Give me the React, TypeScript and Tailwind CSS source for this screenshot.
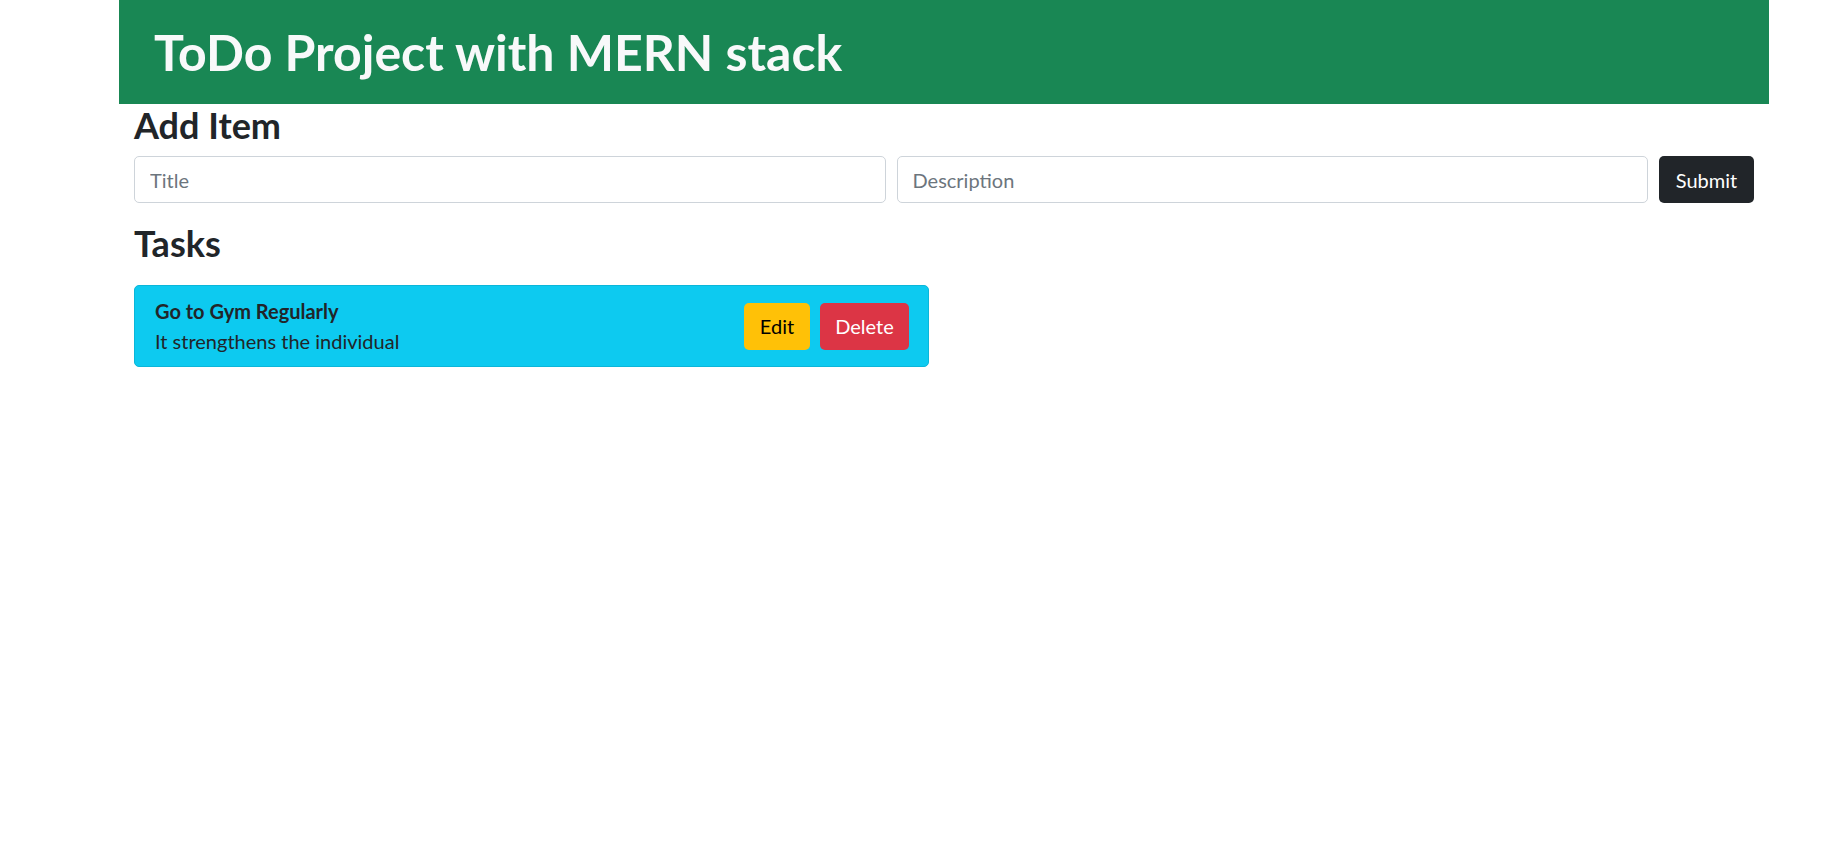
import React from "react";

export default function App() {
  const font = { fontFamily: 'Lato, "Noto Sans", Arial, sans-serif' };
  return (
    <div className="min-h-screen bg-white text-[#212529]" style={font}>
      <div className="ml-[119px] w-[1650px]">
        <header className="flex h-[104px] items-center bg-[#198754] pl-[35px]">
          <h1 className="text-[50px] font-bold leading-[1.2] text-[#f8f9fa]">
            ToDo Project with MERN stack
          </h1>
        </header>
        <main className="px-[15px]">
          <h2 className="text-[36px] font-bold leading-[43px]">Add Item</h2>
          <form
            className="mt-[9px] flex h-[47px] items-stretch gap-[11px]"
            onSubmit={(e) => e.preventDefault()}
          >
            <input
              type="text"
              placeholder="Title"
              className="min-w-0 flex-1 rounded-[5px] border border-[#ced4da] bg-white px-[15px] text-[20px] text-[#212529] placeholder:text-[#6c757d] outline-none"
            />
            <input
              type="text"
              placeholder="Description"
              className="min-w-0 flex-1 rounded-[5px] border border-[#ced4da] bg-white px-[15px] text-[20px] text-[#212529] placeholder:text-[#6c757d] outline-none"
            />
            <button
              type="submit"
              className="w-[95px] shrink-0 rounded-[5px] bg-[#212529] text-[20px] text-white"
            >
              Submit
            </button>
          </form>
          <h2 className="mt-[19px] text-[36px] font-bold leading-[43px]">Tasks</h2>
          <div className="mt-[20px] flex h-[82px] w-[795px] items-center justify-between rounded-[5px] border border-[#0bb6d9] bg-[#0dcaf0] pl-[20px] pr-[19px]">
            <div className="text-[20px] leading-[30px] text-[#212529]">
              <div className="font-bold">Go to Gym Regularly</div>
              <div>It strengthens the individual</div>
            </div>
            <div className="flex items-center gap-[10px]">
              <button className="h-[47px] w-[66px] rounded-[5px] bg-[#ffc107] text-[20px] text-black">
                Edit
              </button>
              <button className="h-[47px] w-[89px] rounded-[5px] bg-[#dc3545] text-[20px] text-white">
                Delete
              </button>
            </div>
          </div>
        </main>
      </div>
    </div>
  );
}
